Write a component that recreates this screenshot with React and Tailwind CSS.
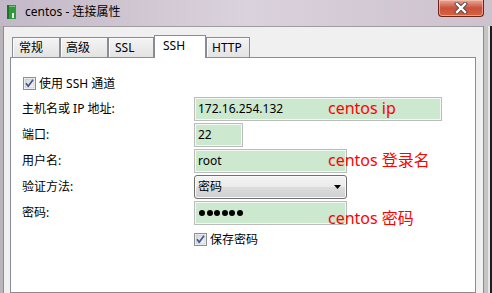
import React from "react";

function Check() {
  return (
    <svg width="13" height="13" viewBox="0 0 13 13" className="shrink-0">
      <defs>
        <linearGradient id="cbg" x1="0" y1="0" x2="1" y2="1">
          <stop offset="0" stopColor="#d3d6db" />
          <stop offset="1" stopColor="#f7f7f7" />
        </linearGradient>
      </defs>
      <rect x="0.5" y="0.5" width="12" height="12" fill="#fff" stroke="#8e8f8f" />
      <rect x="2" y="2" width="9" height="9" fill="url(#cbg)" stroke="#b4b8bf" strokeWidth="0.6" />
      <path d="M3 6.3 L5.2 9.3 L10 2.8" fill="none" stroke="#40568c" strokeWidth="1.7" strokeLinejoin="round" />
    </svg>
  );
}

function Field({ w, children }) {
  return (
    <div
      className={`${w} h-[24px] border border-[#bcbcbc] bg-[#cce8cf] shadow-[inset_0_0_0_1px_#f4f8f4] flex items-center pl-[3px] text-[12px] text-black leading-[16px]`}
    >
      {children}
    </div>
  );
}

function Tab({ w, label, pl }) {
  return (
    <div
      className={`${w} h-[20px] border border-b-0 border-[#898c95] bg-gradient-to-b from-[#f4f4f4] to-[#e3e3e3] shadow-[inset_1px_1px_0_#fbfbfb] flex items-center ${pl} text-[12px] leading-[16px] text-black`}
    >
      {label}
    </div>
  );
}

export default function App() {
  return (
    <div className="relative w-[492px] h-[293px] overflow-hidden flex flex-col bg-gradient-to-r from-[#c3b8c7] via-[#dad2dc] to-[#cdc1ce] [font-family:'Noto_Sans','Noto_Sans_CJK_SC',sans-serif]">
      {/* title bar */}
      <div className="relative h-[26px] shrink-0 flex items-start">
        <svg width="9" height="14" viewBox="0 0 9 14" className="ml-[7px] mt-[5px]">
          <rect x="0" y="0" width="9" height="14" fill="#2f9a3c" />
          <rect x="0" y="0" width="2" height="14" fill="#1d7428" />
          <rect x="5" y="8" width="2" height="5" fill="#ffffff" />
          <rect x="2.5" y="1" width="5.5" height="1" fill="#6cc476" />
        </svg>
        <span className="ml-[9px] mt-[4px] text-[12px] leading-[16px] text-black">centos - 连接属性</span>
        <div className="absolute left-[438px] top-0 w-[46px] h-[17px] rounded-b-[4px] border border-t-0 border-[#6b2418] bg-gradient-to-b from-[#e9a898] via-[#c9513c] to-[#d8613f] shadow-[inset_0_0_0_1px_rgba(255,200,190,0.6)] flex items-center justify-center">
          <svg width="14" height="12" viewBox="0 0 14 12">
            <path d="M3 2 L11 10 M11 2 L3 10" stroke="#4a4a4a" strokeWidth="4.2" strokeLinecap="square" />
            <path d="M3 2 L11 10 M11 2 L3 10" stroke="#ffffff" strokeWidth="2.4" strokeLinecap="square" />
          </svg>
        </div>
      </div>

      {/* body */}
      <div className="flex flex-1 min-h-0">
        {/* left frame */}
        <div className="w-[4px] bg-[#b9b5ba] border-r border-[#8d8d8d]" />
        {/* main panel */}
        <div className="flex-1 bg-[#f0f0f0] border-t border-[#9e9e9e] flex flex-col">
          <div className="flex items-end h-[30px] pl-[8px] pt-[8px]">
            <Tab w="w-[48px]" label="常规" pl="pl-[6px]" />
            <Tab w="w-[48px]" label="高级" pl="pl-[5px]" />
            <Tab w="w-[46px]" label="SSL" pl="pl-[6px]" />
            <div className="relative z-10 w-[52px] h-[23px] -mb-[1px] border border-b-0 border-[#898c95] bg-white flex items-center pl-[8px] pb-[2px] text-[12px] leading-[16px] text-black">
              SSH
            </div>
            <Tab w="w-[44px]" label="HTTP" pl="pl-[5px]" />
          </div>
          <div className="ml-[6px] mr-[7px] h-[260px] bg-white border border-[#898c95] pl-[11px] pt-[19px] flex flex-col">
            <div className="flex items-center h-[13px] pl-[1px] gap-[3px] text-[12px] leading-[16px] text-black">
              <Check />
              <span>使用 SSH 通道</span>
            </div>
            <div className="mt-[7px] grid grid-cols-[172px_1fr] auto-rows-[24px] gap-y-[2px] text-[12px] leading-[16px] text-black">
              <div className="flex items-center">主机名或 IP 地址:</div>
              <Field w="w-[248px]">172.16.254.132</Field>
              <div className="flex items-center">端口:</div>
              <Field w="w-[49px]">22</Field>
              <div className="flex items-center">用户名:</div>
              <Field w="w-[153px]">root</Field>
              <div className="flex items-center">验证方法:</div>
              <div className="w-[153px] h-[24px] rounded-[3px] border border-[#707070] bg-[linear-gradient(to_bottom,#f3f3f3_0%,#ebebeb_50%,#dddddd_50%,#cfcfcf_100%)] shadow-[inset_0_0_0_1px_#fafafa] flex items-center justify-between pl-[3px] pr-[5px]">
                <span>密码</span>
                <svg width="7" height="4" viewBox="0 0 7 4">
                  <path d="M0 0 L7 0 L3.5 4 Z" fill="#000" />
                </svg>
              </div>
              <div className="flex items-center">密码:</div>
              <Field w="w-[153px]">
                <div className="flex gap-[1.5px] pl-[1px]">
                  {[0, 1, 2, 3, 4, 5].map((i) => (
                    <span key={i} className="w-[6px] h-[6px] rounded-full bg-black" />
                  ))}
                </div>
              </Field>
            </div>
            <div className="mt-[8px] ml-[172px] flex items-center h-[13px] gap-[3px] text-[12px] leading-[16px] text-black">
              <Check />
              <span>保存密码</span>
            </div>
          </div>
        </div>
        {/* right frame */}
        <div className="flex w-[9px]">
          <div className="w-[1px] bg-[#8a8a8a]" />
          <div className="w-[4px] bg-[#c4c4c4]" />
          <div className="w-[2px] bg-[#e6e6e6]" />
          <div className="w-[2px] bg-[#1e1e1e]" />
        </div>
      </div>

      {/* annotations */}
      <div className="absolute left-[328px] top-[100px] text-[16px] leading-[16px] text-[#ff0000] whitespace-nowrap">centos ip</div>
      <div className="absolute left-[328px] top-[152px] text-[16px] leading-[16px] text-[#ff0000] whitespace-nowrap">centos 登录名</div>
      <div className="absolute left-[328px] top-[210px] text-[16px] leading-[16px] text-[#ff0000] whitespace-nowrap">centos 密码</div>
    </div>
  );
}
